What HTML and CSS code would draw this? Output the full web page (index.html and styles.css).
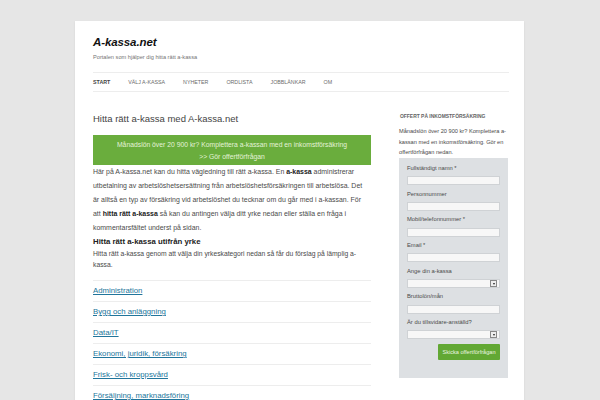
FILE: index.html
```html
<!DOCTYPE html>
<html lang="sv">
<head>
<meta charset="utf-8">
<title>A-kassa.net</title>
<link rel="stylesheet" href="styles.css">
</head>
<body>
<div class="page">
  <header class="site-header">
    <h1 class="site-title">A-kassa.net</h1>
    <p class="tagline">Portalen som hjälper dig hitta rätt a-kassa</p>
    <nav class="nav">
      <a class="nav-item current">Start</a>
      <a class="nav-item">Välj a-kassa</a>
      <a class="nav-item">Nyheter</a>
      <a class="nav-item">Ordlista</a>
      <a class="nav-item">Jobblänkar</a>
      <a class="nav-item">Om</a>
    </nav>
  </header>
  <div class="content">
    <main class="main">
      <h2 class="entry-title">Hitta rätt a-kassa med A-kassa.net</h2>
      <div class="banner">
        <div>Månadslön över 20 900 kr? Komplettera a-kassan med en inkomstförsäkring</div>
        <div>&gt;&gt; Gör offertförfrågan</div>
      </div>
      <p class="intro">Här på A-kassa.net kan du hitta vägledning till rätt a-kassa. En <b>a-kassa</b> administrerar utbetalning av arbetslöshetsersättning från arbetslöshetsförsäkringen till arbetslösa. Det är alltså en typ av försäkring vid arbetslöshet du tecknar om du går med i a-kassan. För att <b>hitta rätt a-kassa</b> så kan du antingen välja ditt yrke nedan eller ställa en fråga i kommentarsfältet underst på sidan.</p>
      <h3 class="sub-title">Hitta rätt a-kassa utifrån yrke</h3>
      <p class="sub-text">Hitta rätt a-kassa genom att välja din yrkeskategori nedan så får du förslag på lämplig a-kassa.</p>
      <ul class="cats">
        <li><a>Administration</a></li>
        <li><a>Bygg och anläggning</a></li>
        <li><a>Data/IT</a></li>
        <li><a>Ekonomi, juridik, försäkring</a></li>
        <li><a>Frisk- och kroppsvård</a></li>
        <li><a>Försäljning, marknadsföring</a></li>
      </ul>
    </main>
    <aside class="sidebar">
      <h3 class="widget-title">Offert på inkomstförsäkring</h3>
      <p class="widget-text">Månadslön över 20 900 kr? Komplettera a-kassan med en inkomstförsäkring. Gör en offertförfrågan nedan.</p>
      <form class="form">
        <div class="field"><label>Fullständigt namn *</label><div class="input"></div></div>
        <div class="field"><label>Personnummer</label><div class="input"></div></div>
        <div class="field"><label>Mobil/telefonnummer *</label><div class="input"></div></div>
        <div class="field"><label>Email *</label><div class="input"></div></div>
        <div class="field"><label>Ange din a-kassa</label><div class="input select"><span class="arrow"></span></div></div>
        <div class="field"><label>Bruttolön/mån</label><div class="input"></div></div>
        <div class="field"><label>Är du tillsvidare-anställd?</label><div class="input select"><span class="arrow"></span></div></div>
        <div class="actions"><span class="button">Skicka offertförfrågan</span></div>
      </form>
    </aside>
  </div>
</div>
</body>
</html>
```
FILE: styles.css
```css
* { box-sizing: border-box; }
html, body { margin: 0; padding: 0; }
body {
  background: #e6e6e6;
  font-family: "Liberation Sans", Arial, sans-serif;
  color: #444;
  padding-top: 21px;
  height: 400px;
  overflow: hidden;
}
.page {
  margin-left: 75px;
  width: 449px;
  background: #fff;
  padding: 14px 15px 40px 18px;
  box-shadow: 0 1px 2px rgba(0,0,0,0.08);
}
.site-title {
  margin: 0;
  font-size: 11.5px;
  line-height: 14px;
  font-weight: bold;
  font-style: italic;
  color: #111;
  letter-spacing: -0.1px;
}
.tagline {
  margin: 4px 0 0;
  font-size: 5.65px;
  line-height: 8px;
  color: #757575;
}
.nav {
  margin-top: 11px;
  border-top: 1px solid #ededed;
  border-bottom: 1px solid #ededed;
  height: 20px;
  display: flex;
  align-items: center;
}
.nav-item {
  font-size: 5.3px;
  line-height: 18px;
  text-transform: uppercase;
  color: #6a6a6a;
  margin-right: 18px;
}
.nav-item.current { color: #444; font-weight: bold; }
.content {
  display: flex;
  gap: 28px;
  margin-top: 20px;
}
.main { width: 278px; }
.sidebar { width: 110px; }
.entry-title {
  margin: 0;
  font-size: 9.5px;
  line-height: 14px;
  font-weight: normal;
  color: #444;
}
.banner {
  margin-top: 9px;
  background: #6aad3d;
  color: #e4f2d8;
  text-align: center;
  font-size: 6.8px;
  line-height: 11.5px;
  padding: 4px 0 3px;
}
.intro {
  margin: 0;
  padding-right: 5px;
  font-size: 6.95px;
  line-height: 14px;
  color: #4a4a4a;
}
.intro b { color: #222; }
.sub-title {
  margin: 1px 0 0;
  font-size: 7.8px;
  line-height: 11px;
  font-weight: bold;
  color: #222;
}
.sub-text {
  margin: 2px 0 0;
  font-size: 6.75px;
  line-height: 10.5px;
  color: #4a4a4a;
}
.cats {
  list-style: none;
  margin: 10px 0 0;
  padding: 0;
}
.cats li {
  border-top: 1px solid #ededed;
  height: 21px;
  line-height: 20px;
  font-size: 7.8px;
}
.cats a {
  color: #21759b;
  text-decoration: underline;
}
.widget-title {
  margin: 1px 0 0;
  font-size: 4.95px;
  line-height: 8px;
  font-weight: bold;
  text-transform: uppercase;
  color: #636363;
  padding-left: 1px;
}
.widget-text {
  margin: 5px -1px 0 0;
  font-size: 5.65px;
  line-height: 10.5px;
  color: #4a4a4a;
}
.form {
  width: 109px;
  background: #dde0e3;
  padding: 6.5px 8px 18px 8px;
}
.field label {
  display: block;
  font-size: 5.8px;
  line-height: 9px;
  color: #4a4a4a;
}
.field .input {
  margin-top: 3.3px;
  height: 9px;
  background: #f7f7f7;
  border: 1px solid #cfd2d5;
  margin-bottom: 4.4px;
  position: relative;
}
.select .arrow {
  position: absolute;
  right: 2px;
  top: 0;
  width: 7px;
  height: 7px;
  background: #eee;
  border: 1px solid #888;
}
.select .arrow::after {
  content: "";
  position: absolute;
  left: 1.5px;
  top: 2px;
  border-left: 1.5px solid transparent;
  border-right: 1.5px solid transparent;
  border-top: 2px solid #222;
}
.actions {
  display: flex;
  justify-content: flex-end;
  margin-top: 0.5px;
}
.button {
  display: block;
  width: 62px;
  height: 16px;
  line-height: 16px;
  text-align: center;
  background: #62a834;
  color: #eaf5e0;
  font-size: 5.6px;
  border-radius: 1px;
}
```
